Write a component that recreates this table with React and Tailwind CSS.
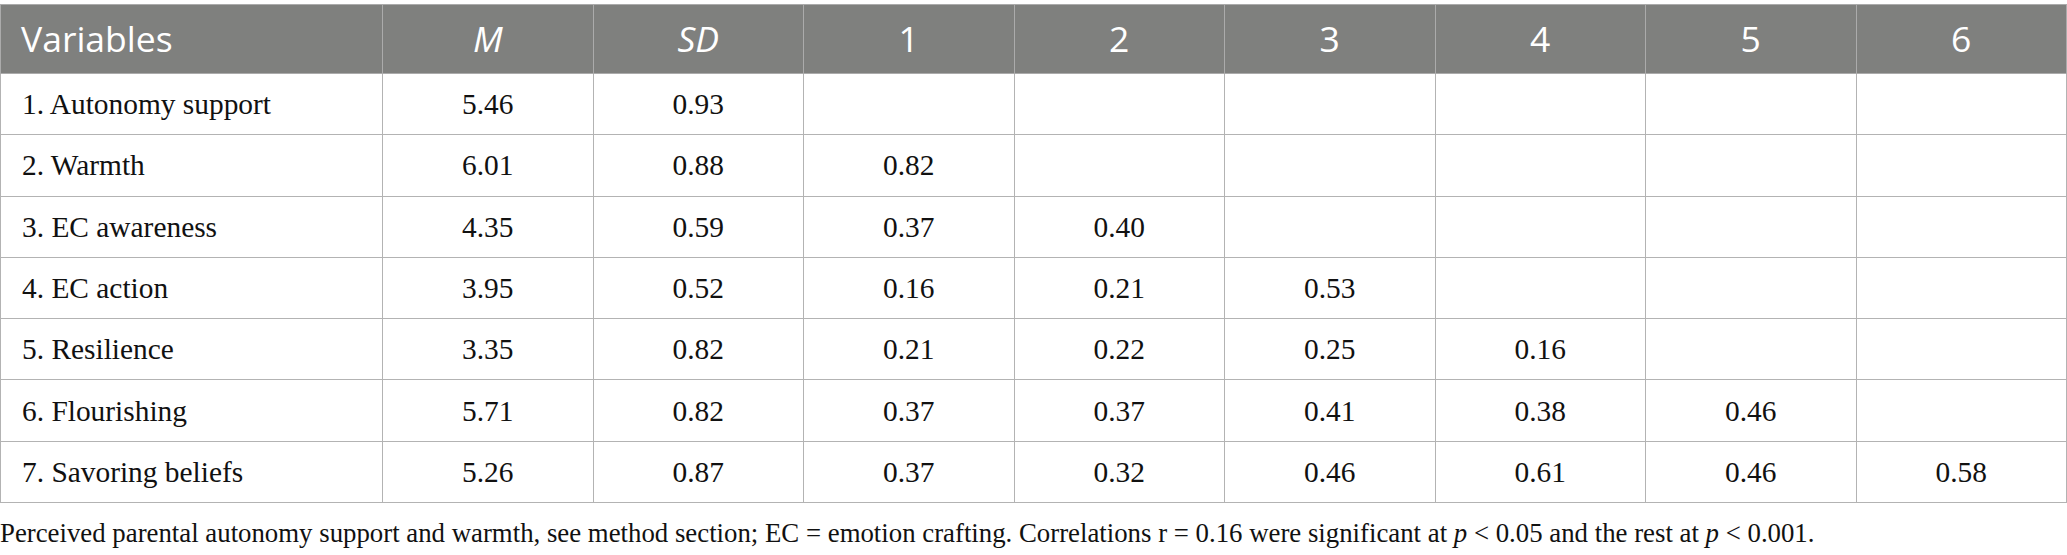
const cols = ['M', 'SD', '1', '2', '3', '4', '5', '6'];

const rows = [
  ['1. Autonomy support', '5.46', '0.93', '', '', '', '', '', ''],
  ['2. Warmth', '6.01', '0.88', '0.82', '', '', '', '', ''],
  ['3. EC awareness', '4.35', '0.59', '0.37', '0.40', '', '', '', ''],
  ['4. EC action', '3.95', '0.52', '0.16', '0.21', '0.53', '', '', ''],
  ['5. Resilience', '3.35', '0.82', '0.21', '0.22', '0.25', '0.16', '', ''],
  ['6. Flourishing', '5.71', '0.82', '0.37', '0.37', '0.41', '0.38', '0.46', ''],
  ['7. Savoring beliefs', '5.26', '0.87', '0.37', '0.32', '0.46', '0.61', '0.46', '0.58'],
];

export default function App() {
  return (
    <div className="w-[2067px] bg-white pt-[4px]">
      <table className="w-full table-fixed border-collapse">
        <colgroup>
          <col className="w-[382px]" />
          {cols.map((c) => (
            <col key={c} />
          ))}
        </colgroup>
        <thead>
          <tr className="h-[69px] bg-[#7f807e] text-white font-['Open_Sans',sans-serif] text-[35.5px]">
            <th className="border border-[#ababab] pl-[20px] text-left font-normal">Variables</th>
            {cols.map((c) => (
              <th
                key={c}
                className={`border border-[#ababab] text-center font-normal ${c === 'M' || c === 'SD' ? 'italic' : ''}`}
              >
                {c}
              </th>
            ))}
          </tr>
        </thead>
        <tbody className="font-['Liberation_Serif',serif] text-[29.4px] text-[#111]">
          {rows.map((r) => (
            <tr key={r[0]} className="h-[61.3px]">
              {r.map((cell, i) => (
                <td
                  key={i}
                  className={`border border-[#b3b3b3] ${i === 0 ? 'pl-[21px] text-left' : 'text-center'}`}
                >
                  {cell}
                </td>
              ))}
            </tr>
          ))}
        </tbody>
      </table>
      <p className="mt-[14px] font-['Liberation_Serif',serif] text-[26.8px] leading-[1.2] text-[#111]">
        Perceived parental autonomy support and warmth, see method section; EC = emotion crafting. Correlations r = 0.16
        were significant at <i>p</i> &lt; 0.05 and the rest at <i>p</i> &lt; 0.001.
      </p>
    </div>
  );
}
